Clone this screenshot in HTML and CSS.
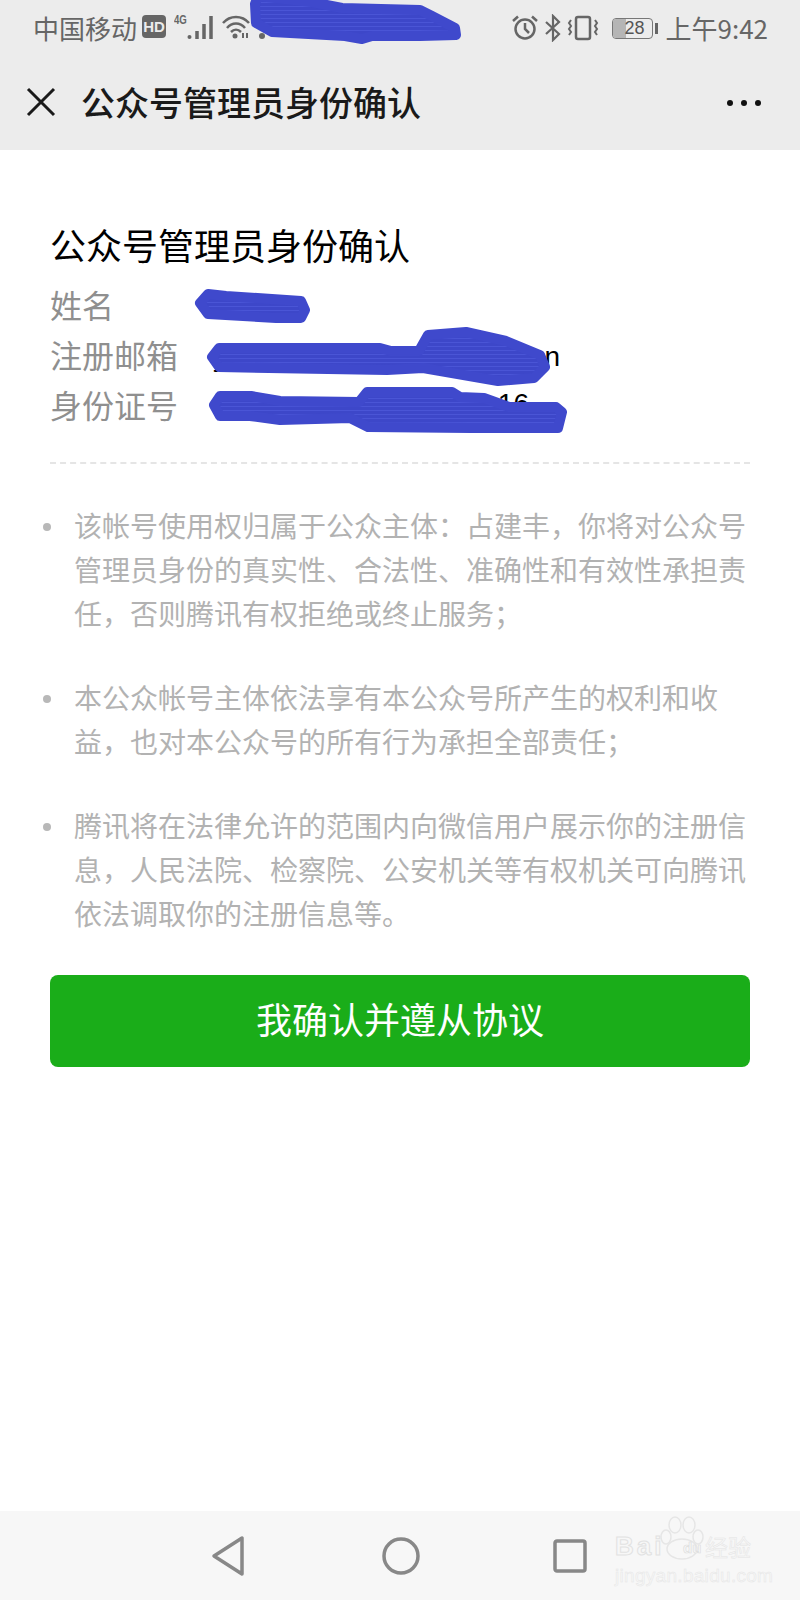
FILE: index.html
```html
<!DOCTYPE html>
<html lang="zh">
<head>
  <meta charset="utf-8">
  <meta name="viewport" content="width=device-width, initial-scale=1.0">
  <title>公众号管理员身份确认</title>
  <link rel="stylesheet" href="styles.css">
</head>
<body>
<header class="top">
  <div class="status">
    <div class="status-left">
      <span class="carrier">中国移动</span>
      <span class="hd">HD</span>
      <span class="net">4G</span>
      <svg class="signal" width="26" height="24" viewBox="0 0 26 24">
        <circle cx="2.500" cy="22" r="2" fill="#666"/>
        <path d="M10 24V16M17 24V9M24 24V1" stroke="#666" stroke-width="3.500" fill="none"/>
      </svg>
      <svg class="wifi" width="44" height="24" viewBox="0 0 44 24">
        <path d="M1 8C8 0 20 0 27 8M5 13C10 7 18 7 23 13M9 17C12 14 16 14 19 17" stroke="#666" stroke-width="2.500" fill="none"/>
        <circle cx="13" cy="21" r="2.500" fill="#666"/>
        <path d="M21 23V18M25 18V23" stroke="#666" stroke-width="2" fill="none"/>
        <circle cx="40" cy="21" r="3" fill="#666"/>
      </svg>
    </div>
    <div class="status-right">
      <svg width="28" height="28" viewBox="0 0 28 28">
        <circle cx="14" cy="15" r="9.500" stroke="#666" stroke-width="2.500" fill="none"/>
        <path d="M14 9V15L18 19M2 7L7 2.500M26 7L21 2.500" stroke="#666" stroke-width="2.500" fill="none"/>
      </svg>
      <svg width="18" height="28" viewBox="0 0 18 28">
        <path d="M2 8L15 20L9 26V2L15 8L2 20" stroke="#666" stroke-width="2.200" fill="none"/>
      </svg>
      <svg width="32" height="26" viewBox="0 0 32 26">
        <rect x="9" y="2" width="14" height="22" rx="2" stroke="#666" stroke-width="2.500" fill="none"/>
        <path d="M4 5L2 8L4 11L2 14L4 17L2 20M28 5L30 8L28 11L30 14L28 17L30 20" stroke="#666" stroke-width="2" fill="none"/>
      </svg>
      <div class="battery">
        <span class="battery-body"><span class="battery-fill"></span><span class="battery-num">28</span></span>
        <span class="battery-nub"></span>
      </div>
      <span class="clock">上午9:42</span>
    </div>
  </div>
  <div class="nav">
    <svg class="close" width="30" height="30" viewBox="0 0 30 30">
      <path d="M2 2L28 28M28 2L2 28" stroke="#1a1a1a" stroke-width="3" fill="none"/>
    </svg>
    <span class="nav-title">公众号管理员身份确认</span>
    <span class="dots"><i></i><i></i><i></i></span>
  </div>
</header>

<main class="content">
  <section class="info">
    <h1>公众号管理员身份确认</h1>
    <div class="row"><span class="label">姓名</span><span class="value"></span></div>
    <div class="row"><span class="label">注册邮箱</span><span class="value value-mail"><span>y</span><span>n</span></span></div>
    <div class="row"><span class="label">身份证号</span><span class="value value-id"><span>1</span><span>16</span></span></div>
  </section>
  <ul class="terms">
    <li>该帐号使用权归属于公众主体：占建丰，你将对公众号管理员身份的真实性、合法性、准确性和有效性承担责任，否则腾讯有权拒绝或终止服务；</li>
    <li>本公众帐号主体依法享有本公众号所产生的权利和收<br>益，也对本公众号的所有行为承担全部责任；</li>
    <li>腾讯将在法律允许的范围内向微信用户展示你的注册信息，人民法院、检察院、公安机关等有权机关可向腾讯依法调取你的注册信息等。</li>
  </ul>
  <button class="confirm" type="button">我确认并遵从协议</button>
</main>

<footer class="navbar">
  <svg width="36" height="42" viewBox="0 0 36 42">
    <path d="M32 3V39L4 21Z" stroke="#888" stroke-width="3.500" stroke-linejoin="round" fill="none"/>
  </svg>
  <svg width="38" height="38" viewBox="0 0 38 38">
    <circle cx="19" cy="19" r="17" stroke="#888" stroke-width="3.500" fill="none"/>
  </svg>
  <svg width="34" height="34" viewBox="0 0 34 34">
    <rect x="2" y="2" width="30" height="30" rx="2" stroke="#888" stroke-width="3.500" fill="none"/>
  </svg>
  <div class="mark">
    <svg class="paw" width="46" height="46" viewBox="0 0 46 46">
      <g fill="#f7f7f7" stroke="#e6e6e6" stroke-width="1.500">
        <ellipse cx="16" cy="10" rx="6" ry="8"/>
        <ellipse cx="30" cy="10" rx="6" ry="8"/>
        <ellipse cx="7" cy="22" rx="5" ry="7"/>
        <ellipse cx="39" cy="22" rx="5" ry="7"/>
        <ellipse cx="23" cy="34" rx="15" ry="10"/>
      </g>
    </svg>
    <div class="mark-top"><span class="mark-bai">Bai</span><span class="mark-du">du</span><span class="mark-cn">经验</span></div>
    <div class="mark-url">jingyan.baidu.com</div>
  </div>
</footer>

<svg class="scribbles" width="800" height="1600" viewBox="0 0 800 1600">
  <defs>
    <pattern id="strokes" width="6" height="4" patternUnits="userSpaceOnUse">
      <rect width="6" height="4" fill="#3d47c9"/>
      <rect y="2" width="6" height="1" fill="#4a55d6"/>
    </pattern>
  </defs>
  <g fill="url(#strokes)" stroke="#3f49cc" stroke-width="10" stroke-linejoin="round">
    <polygon points="255,4 258,-4 312,2 342,8 420,10 432,16 455,28 456,35 420,36 372,36 362,39 345,36 272,32 256,23"/>
    <polygon points="200,303 208,294 226,296 301,301 305,310 301,318 276,318 208,314"/>
    <polygon points="212,357 219,348 380,348 391,351 419,351 428,335 466,332 506,341 540,355 545,367 534,378 498,381 423,368 387,370 219,367"/>
    <polygon points="214,405 220,396 251,396 280,401 359,402 367,392 452,392 460,397 484,398 509,407 556,407 562,412 558,428 470,428 368,427 350,418 280,420 250,416 220,416"/>
  </g>
</svg>
</body>
</html>
```

FILE: styles.css
```css
* { box-sizing: border-box; }
html, body { margin: 0; padding: 0; }
body { width: 800px; height: 1600px; display: flex; flex-direction: column; position: relative; overflow: hidden; background: #fff; font-family: "Noto Sans CJK SC", "Noto Sans", sans-serif; color: #000; }

.top { height: 150px; background: #ececec; flex: none; }
.status { height: 56px; padding: 0 32px 0 33px; display: flex; justify-content: space-between; align-items: center; color: #666; }
.status-left, .status-right { display: flex; align-items: center; }
.carrier { font-size: 26px; line-height: 32px; }
.hd { width: 24px; height: 23px; margin: 0 0 3px 5px; background: #666; border-radius: 4px; color: #ececec; font: bold 15px/23px "Liberation Sans", sans-serif; text-align: center; }
.net { width: 13px; margin: 0 0 16px 8px; font: bold 12px/12px "Liberation Sans", sans-serif; white-space: nowrap; transform: scaleX(0.8); transform-origin: left; }
.signal { margin-bottom: 3px; }
.wifi { margin: 0 0 3px 9px; }
.status-right svg { margin-right: 5px; }
.battery { display: flex; align-items: center; margin: 0 7px 0 8px; }
.battery-body { position: relative; width: 41px; height: 21px; border: 1.500px solid #777; border-radius: 4px; overflow: hidden; display: block; }
.battery-fill { position: absolute; left: 0; top: 0; bottom: 0; width: 13px; background: #b5b5b5; }
.battery-num { position: relative; display: block; text-align: center; font: 18px/18px "Liberation Sans", sans-serif; color: #555; padding-left: 3px; }
.battery-nub { width: 3px; height: 11px; margin-left: 2px; background: #666; }
.clock { font-size: 26px; line-height: 32px; }

.nav { height: 94px; padding: 0 39px 0 26px; display: flex; align-items: center; margin-top: -1px; }
.close { flex: none; }
.nav-title { margin-left: 25px; font-size: 34px; line-height: 50px; font-weight: 500; color: #1a1a1a; flex: 1; }
.dots { display: flex; gap: 8px; margin-top: 2px; }
.dots i { width: 6px; height: 6px; border-radius: 50%; background: #111; }

.content { flex: 1; padding: 69px 50px 0; }
.info { padding-bottom: 33px; border-bottom: 2px dashed #e5e5e5; }
h1 { margin: 0 0 10px; font-size: 36px; line-height: 50px; font-weight: 400; color: #000; }
.row { display: flex; height: 50px; align-items: center; font-size: 32px; line-height: 50px; }
.label { width: 157px; color: #8f8f8f; }
.value { width: 353px; padding-left: 6px; display: flex; justify-content: space-between; font: 28px/50px "Liberation Sans", sans-serif; color: #000; }
.value-mail { padding-top: 5px; }
.value-id { width: 322px; }

.terms { margin: 39px 0 0; padding: 0 0 0 24px; list-style: none; }
.terms li { position: relative; margin-bottom: 40px; font-size: 28px; line-height: 44px; color: #b2b2b2; }
.terms li:last-child { margin-bottom: 0; }
.terms li::before { content: ""; position: absolute; left: -31px; top: 20px; width: 8px; height: 8px; border-radius: 50%; background: #b8b8b8; }

.confirm { display: block; width: 100%; height: 92px; margin-top: 40px; padding: 0 0 6px; border: 0; border-radius: 8px; background: #1aad19; color: #fff; font-family: inherit; font-size: 36px; }

.navbar { height: 89px; flex: none; background: #f7f7f7; position: relative; display: flex; align-items: center; padding: 0 0 0 210px; }
.navbar svg:nth-child(2) { margin-left: 136px; }
.navbar svg:nth-child(3) { margin-left: 133px; }
.mark { position: absolute; left: 615px; top: 4px; width: 150px; height: 80px; color: #f7f7f7; font-family: "Liberation Sans", sans-serif; -webkit-text-stroke: 1px #e2e2e2; }
.paw { position: absolute; left: 44px; top: 0; }
.mark-top { position: relative; display: flex; margin-top: 16px; height: 30px; font-weight: bold; }
.mark-bai { width: 68px; font-size: 26px; line-height: 30px; letter-spacing: 3px; }
.mark-du { width: 22px; font-size: 15px; line-height: 34px; -webkit-text-stroke: 0.700px #dedede; }
.mark-cn { font-family: "Noto Sans CJK SC", sans-serif; font-size: 23px; line-height: 30px; font-weight: 400; -webkit-text-stroke: 0.500px #e4e4e4; color: #f7f7f7; }
.mark-url { margin-top: 5px; font-size: 19px; line-height: 20px; -webkit-text-stroke: 0.500px #e6e6e6; letter-spacing: 0.300px; }

.scribbles { position: absolute; left: 0; top: 0; pointer-events: none; }
```
